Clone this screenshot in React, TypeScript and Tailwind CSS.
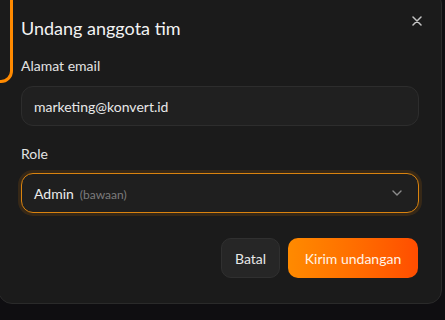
import React from "react";

export default function App() {
  return (
    <div
      className="relative w-[445px] h-[320px] overflow-hidden bg-[#0f0e11]"
      style={{ fontFamily: "Lato, 'Noto Sans', sans-serif" }}
    >
      <div className="relative ml-[-2px] mt-[-10px] w-[444px] rounded-[14px] border border-[#2a2a2a] bg-[#1b1b1b] px-[22px] pt-[23px] pb-[25px]">
        <div className="text-[18px] leading-[28px] text-[#f2f2f2]">Undang anggota tim</div>
        <button className="absolute right-[19px] top-[25px] flex h-[10px] w-[10px] items-center justify-center text-[#c4c4c4]">
          <svg width="10" height="10" viewBox="0 0 10 10" fill="none" stroke="currentColor" strokeWidth="1.5" strokeLinecap="round">
            <path d="M1 1L9 9M9 1L1 9" />
          </svg>
        </button>

        <div className="mt-[14px] flex flex-col gap-[10px]">
          <div className="text-[14px] leading-[20px] text-[#e3e3e3]">Alamat email</div>
          <div className="flex h-[40px] items-center rounded-[12px] border border-[#2d2d2d] bg-[#202020] px-[12px] text-[14px] text-[#e8e8e8]">
            marketing@konvert.id
          </div>
        </div>

        <div className="mt-[18px] flex flex-col gap-[9px]">
          <div className="text-[14px] leading-[20px] text-[#e3e3e3]">Role</div>
          <div className="flex h-[40px] items-center justify-between rounded-[12px] border border-[#d9830f] bg-[#1f1f1f] px-[12px] shadow-[0_0_0_3px_rgba(255,138,0,0.12)]">
            <div className="flex items-baseline gap-[6px]">
              <span className="text-[14px] text-[#ececec]">Admin</span>
              <span className="text-[12px] text-[#7c7c7c]">(bawaan)</span>
            </div>
            <svg width="10" height="6" viewBox="0 0 10 6" fill="none" stroke="#8c8c8c" strokeWidth="1.4" strokeLinecap="round" strokeLinejoin="round" className="mr-[4px]">
              <path d="M1 1L5 5L9 1" />
            </svg>
          </div>
        </div>

        <div className="mt-[25px] flex justify-end gap-[8px] pr-[1px]">
          <button className="h-[40px] w-[59px] rounded-[10px] border border-[#303030] bg-[#262626] text-[14px] text-[#e8e8e8]">
            Batal
          </button>
          <button className="h-[40px] w-[130px] rounded-[10px] bg-gradient-to-r from-[#ff8a00] to-[#ff4d00] text-[14px] text-[#fff3e6]">
            Kirim undangan
          </button>
        </div>
      </div>

      <div className="pointer-events-none absolute left-[-20px] top-[-20px] h-[103px] w-[33px] rounded-[12px] border-[3px] border-[#ff8a00]" />
    </div>
  );
}
